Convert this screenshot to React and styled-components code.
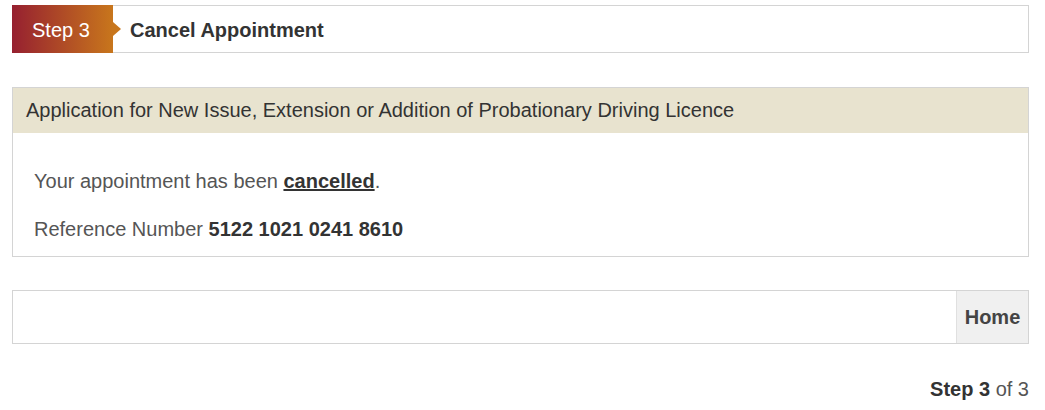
import styled, { createGlobalStyle } from "styled-components";

const GlobalStyle = createGlobalStyle`
  body {
    margin: 0;
    background: #fff;
    font-family: "Liberation Sans", Arial, sans-serif;
    color: #333;
  }
`;

const Page = styled.div`
  padding: 5px 16px 0 12px;
`;

const StepBar = styled.div`
  display: flex;
  align-items: stretch;
  height: 48px;
  border: 1px solid #d4d4d4;
  box-sizing: border-box;
`;

const StepBadge = styled.div`
  position: relative;
  display: flex;
  align-items: center;
  width: 101px;
  padding: 2px 0 0 20px;
  box-sizing: border-box;
  margin: -1px 0 -1px -1px;
  background: linear-gradient(to right, #962030, #c8761c);
  color: #fff;
  font-size: 20px;
  &::after {
    content: "";
    position: absolute;
    right: -8px;
    top: 50%;
    margin-top: -7px;
    border-top: 7px solid transparent;
    border-bottom: 7px solid transparent;
    border-left: 8px solid #c8761c;
  }
`;

const StepTitle = styled.div`
  display: flex;
  align-items: center;
  padding: 2px 0 0 17px;
  font-size: 20px;
  font-weight: bold;
  color: #333;
`;

const Panel = styled.div`
  margin-top: 34px;
  border: 1px solid #d4d4d4;
`;

const PanelHeader = styled.div`
  background: #e8e3cf;
  height: 45px;
  display: flex;
  align-items: center;
  padding-left: 13px;
  font-size: 20px;
  color: #333;
`;

const PanelBody = styled.div`
  padding: 36px 21px 15px;
`;

const Line = styled.p`
  margin: 0 0 ${(p) => p.$gap || 0}px;
  font-size: 20px;
  line-height: 24px;
  color: #555;
  b {
    color: #333;
  }
  u {
    font-weight: bold;
    color: #333;
  }
`;

const ActionBar = styled.div`
  margin-top: 33px;
  display: flex;
  justify-content: flex-end;
  height: 54px;
  border: 1px solid #d4d4d4;
  box-sizing: border-box;
`;

const HomeButton = styled.button`
  width: 72px;
  border: none;
  border-left: 1px solid #e0e0e0;
  background: #f0f0f0;
  font-family: "Liberation Sans", Arial, sans-serif;
  font-size: 20px;
  font-weight: bold;
  color: #444;
  cursor: pointer;
  padding: 0;
`;

const StepCount = styled.div`
  margin-top: 33px;
  text-align: right;
  font-size: 20px;
  line-height: 24px;
  color: #555;
  b {
    color: #333;
  }
`;

export default function App() {
  return (
    <>
      <GlobalStyle />
      <Page>
        <StepBar>
          <StepBadge>Step 3</StepBadge>
          <StepTitle>Cancel Appointment</StepTitle>
        </StepBar>
        <Panel>
          <PanelHeader>
            Application for New Issue, Extension or Addition of Probationary Driving Licence
          </PanelHeader>
          <PanelBody>
            <Line $gap={24}>
              Your appointment has been <u>cancelled</u>.
            </Line>
            <Line>
              Reference Number <b>5122 1021 0241 8610</b>
            </Line>
          </PanelBody>
        </Panel>
        <ActionBar>
          <HomeButton>Home</HomeButton>
        </ActionBar>
        <StepCount>
          <b>Step 3</b> of 3
        </StepCount>
      </Page>
    </>
  );
}
